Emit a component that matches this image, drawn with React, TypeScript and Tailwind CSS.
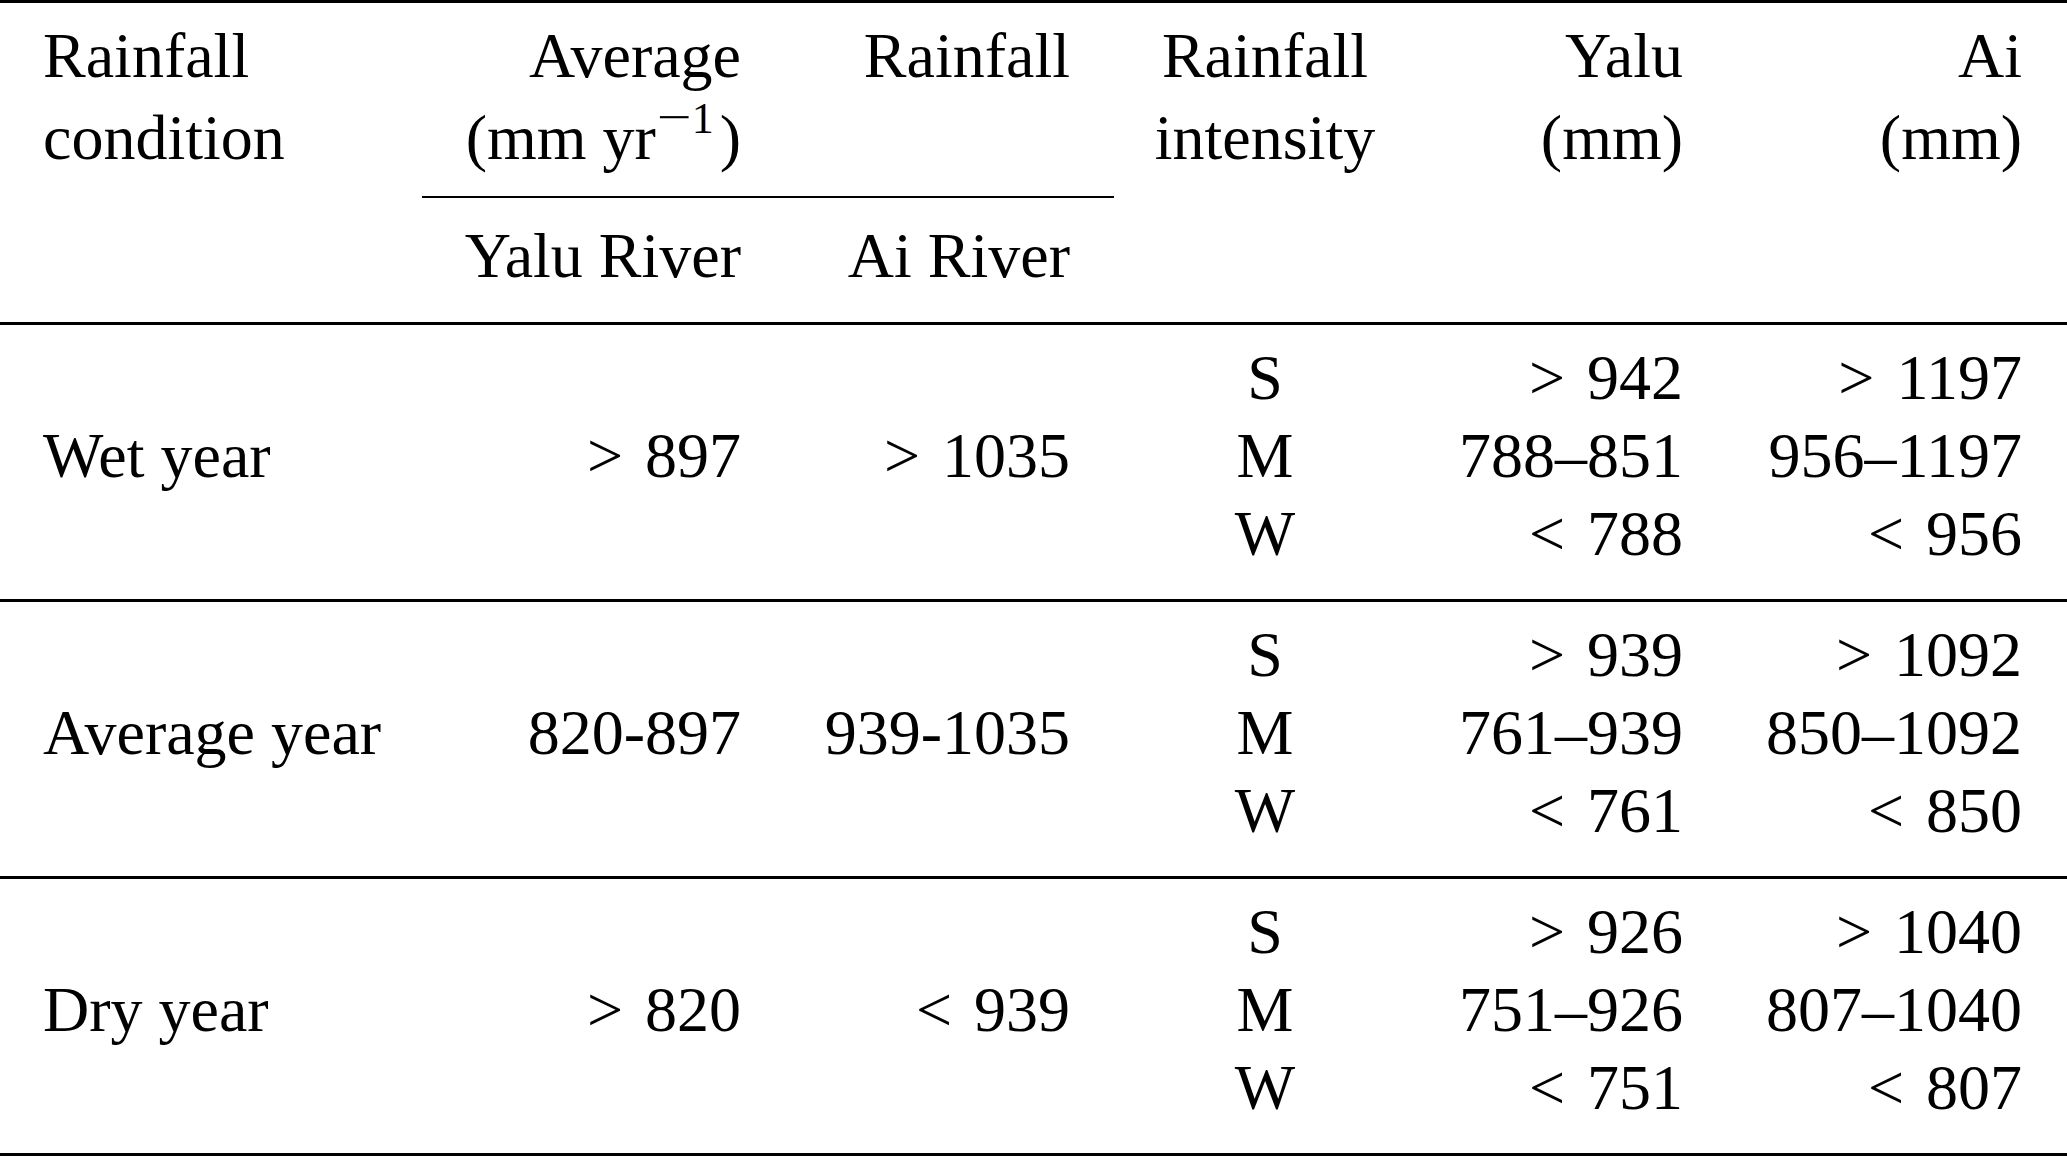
import React from "react";

type Row = {
  condition: string;
  yalu: string;
  ai: string;
  levels: { label: string; yalu: string; ai: string }[];
};

const rows: Row[] = [
  {
    condition: "Wet year",
    yalu: "> 897",
    ai: "> 1035",
    levels: [
      { label: "S", yalu: "> 942", ai: "> 1197" },
      { label: "M", yalu: "788–851", ai: "956–1197" },
      { label: "W", yalu: "< 788", ai: "< 956" },
    ],
  },
  {
    condition: "Average year",
    yalu: "820-897",
    ai: "939-1035",
    levels: [
      { label: "S", yalu: "> 939", ai: "> 1092" },
      { label: "M", yalu: "761–939", ai: "850–1092" },
      { label: "W", yalu: "< 761", ai: "< 850" },
    ],
  },
  {
    condition: "Dry year",
    yalu: "> 820",
    ai: "< 939",
    levels: [
      { label: "S", yalu: "> 926", ai: "> 1040" },
      { label: "M", yalu: "751–926", ai: "807–1040" },
      { label: "W", yalu: "< 751", ai: "< 807" },
    ],
  },
];

const cols = "grid grid-cols-[422px_363px_329px_302px_311px_340px]";

export default function App() {
  return (
    <div className="w-[2067px] h-[1156px] bg-white text-black font-['Liberation_Serif','Times_New_Roman',serif] text-[64px] leading-[78px]">
      {/* top rule */}
      <div className="h-[3px] bg-black" />

      {/* header */}
      <div className="flex h-[319px] leading-[82px]">
        <div className="w-[422px] pt-[12px] pl-[43px]">
          <div>Rainfall</div>
          <div>condition</div>
        </div>
        <div className="w-[692px] flex flex-col">
          <div className="grid grid-cols-[363px_329px] pt-[12px]">
            <div className="text-right pr-[44px]">
              <div>Average</div>
              <div>
                (mm yr
                <span className="relative top-[-27px] inline-block text-[44px] leading-none scale-x-[1.4] ml-[6px] mr-[5px]">−</span>
                <span className="relative top-[-26px] text-[44px] leading-none">1</span>
                <span className="ml-[6px]">)</span>
              </div>
            </div>
            <div className="text-right pr-[44px]">
              <div>Rainfall</div>
            </div>
          </div>
          <div className="mt-[17px] h-[2px] bg-black" />
          <div className="grid grid-cols-[363px_329px] mt-[19px] leading-[78px]">
            <div className="text-right pr-[44px]">Yalu River</div>
            <div className="text-right pr-[44px]">Ai River</div>
          </div>
        </div>
        <div className="w-[302px] pt-[12px] text-center">
          <div>Rainfall</div>
          <div>intensity</div>
        </div>
        <div className="w-[311px] pt-[12px] text-right pr-[44px]">
          <div>Yalu</div>
          <div>(mm)</div>
        </div>
        <div className="w-[340px] pt-[12px] text-right pr-[45px]">
          <div>Ai</div>
          <div>(mm)</div>
        </div>
      </div>

      {rows.map((row) => (
        <div key={row.condition}>
          <div className="h-[3px] bg-black" />
          <div className={`${cols} h-[274px] pt-[14px] pb-[26px] [word-spacing:6px]`}>
            <div className="flex items-center pl-[43px] [word-spacing:0px]">{row.condition}</div>
            <div className="flex items-center justify-end pr-[44px]">{row.yalu}</div>
            <div className="flex items-center justify-end pr-[44px]">{row.ai}</div>
            <div className="flex flex-col items-center">
              {row.levels.map((l) => (
                <div key={l.label}>{l.label}</div>
              ))}
            </div>
            <div className="flex flex-col items-end pr-[44px]">
              {row.levels.map((l) => (
                <div key={l.label}>{l.yalu}</div>
              ))}
            </div>
            <div className="flex flex-col items-end pr-[45px]">
              {row.levels.map((l) => (
                <div key={l.label}>{l.ai}</div>
              ))}
            </div>
          </div>
        </div>
      ))}

      {/* bottom rule */}
      <div className="h-[3px] bg-black" />
    </div>
  );
}
